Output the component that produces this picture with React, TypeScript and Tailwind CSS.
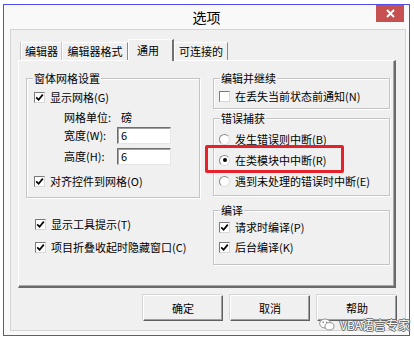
import React from 'react'

const CheckBox: React.FC<{ checked?: boolean }> = ({ checked }) => (
    <span className="w-[11px] h-[11px] shrink-0 bg-white border border-[#7a7a7a] border-b-[#d8d8d8] border-r-[#d8d8d8] flex items-center justify-center">
        {checked && (
            <svg width="9" height="9" viewBox="0 0 9 9">
                <path d="M1.2 4.3 L3.6 6.8 L7.8 1.6" stroke="#000" strokeWidth="1.7" fill="none" />
            </svg>
        )}
    </span>
)

const Radio: React.FC<{ checked?: boolean }> = ({ checked }) => (
    <span className="w-[11px] h-[11px] shrink-0 rounded-full bg-white border border-[#8a8a8a] border-b-[#dedede] border-r-[#dedede] flex items-center justify-center">
        {checked && <span className="w-[4px] h-[4px] rounded-full bg-black" />}
    </span>
)

interface RowProps {
    className?: string;
    children: React.ReactNode;
}

const Row: React.FC<RowProps> = ({ className = '', children }) => (
    <div className={'flex items-center h-[16px] gap-[5px] ' + className}>{children}</div>
)

interface GroupProps {
    title: string;
    className?: string;
    children: React.ReactNode;
}

const Group: React.FC<GroupProps> = ({ title, className = '', children }) => (
    <div className={'border border-[#c4c4c4] shadow-[1px_1px_0_#fff,inset_1px_1px_0_#fff] ' + className}>
        <div className="-mt-[8px] ml-[6px] px-[1px] w-fit h-[14px] leading-[14px] bg-[#f0f0f0]">{title}</div>
        {children}
    </div>
)

const NumberBox: React.FC<{ value: string }> = ({ value }) => (
    <div className="w-[54px] h-[17px] bg-white border border-[#6e6e6e] border-b-[#e6e6e6] border-r-[#e6e6e6] shadow-[inset_1px_1px_0_#a0a0a0] pl-[3px] leading-[15px]">
        {value}
    </div>
)

const DialogButton: React.FC<{ label: string }> = ({ label }) => (
    <div className="w-[80px] h-[26px] flex items-center justify-center bg-[#f0f0f0] border border-white border-b-[#5f5f5f] border-r-[#5f5f5f] shadow-[inset_-1px_-1px_0_#a0a0a0,-1px_-1px_0_#d6d6d6]">
        {label}
    </div>
)

const tabs = [
    { label: '编辑器', w: 'w-[41px]' },
    { label: '编辑器格式', w: 'w-[66px]' },
    { label: '通用', w: 'w-[46px]', active: true },
    { label: '可连接的', w: 'w-[54px]' },
]

export default function App() {
    return (
        <div className="w-[414px] h-[344px] bg-white relative pt-[4px] pl-[3px] text-[11px] text-black font-['Noto_Sans_CJK_SC','Liberation_Sans',sans-serif]">
            {/* window */}
            <div className="w-[407px] h-[332px] border border-[#4d4df0] bg-[#f9f9f9] flex flex-col">
                <div className="h-[24px] grid grid-cols-[1fr_auto_1fr]">
                    <div />
                    <div className="text-[14px] leading-[24px]">选项</div>
                    <div className="flex justify-end">
                        <div className="w-[28px] h-[17px] mr-[5px] bg-[#c75050] flex items-center justify-center">
                            <svg width="9" height="9" viewBox="0 0 9 9">
                                <path d="M1 1 L8 8 M8 1 L1 8" stroke="#fff" strokeWidth="1.8" />
                            </svg>
                        </div>
                    </div>
                </div>

                {/* client area */}
                <div className="ml-[6px] mr-[3px] h-[302px] border border-[#d4d4d4] bg-[#f0f0f0] pt-[9px] pl-[7px] flex flex-col">
                    <div className="h-[21px] flex items-end pl-[3px]">
                        {tabs.map((t) =>
                            t.active ? (
                                <div
                                    key={t.label}
                                    className={t.w + ' h-[22px] -mb-[1px] relative z-10 bg-[#f0f0f0] border-t border-l border-white border-r-2 border-r-[#707070] pl-[8px] pt-[3px] leading-[14px]'}
                                >
                                    {t.label}
                                </div>
                            ) : (
                                <div
                                    key={t.label}
                                    className={t.w + ' h-[18px] bg-[#f0f0f0] border-t border-l border-white border-r border-r-[#8a8a8a] shadow-[-1px_0_0_#c8c8c8] text-center leading-[17px]'}
                                >
                                    {t.label}
                                </div>
                            )
                        )}
                    </div>

                    {/* tab panel */}
                    <div className="w-[378px] h-[228px] border border-white border-r-2 border-b-2 border-r-[#6a6a6a] border-b-[#6a6a6a] shadow-[inset_-1px_-1px_0_#a8a8a8] flex pl-[7px] pt-[17px] gap-[13px]">
                        <div className="w-[174px] flex flex-col">
                            <Group title="窗体网格设置" className="h-[120px]">
                                <Row className="mt-[4px] pl-[7px]">
                                    <CheckBox checked />
                                    <span>显示网格(G)</span>
                                </Row>
                                <Row className="mt-[4px] pl-[37px] gap-0">
                                    <span className="w-[52px]">网格单位:</span>
                                    <span>磅</span>
                                </Row>
                                <div className="mt-[2px] h-[17px] flex items-center pl-[37px]">
                                    <span className="w-[53px]">宽度(W):</span>
                                    <NumberBox value="6" />
                                </div>
                                <div className="mt-[4px] h-[17px] flex items-center pl-[37px]">
                                    <span className="w-[53px]">高度(H):</span>
                                    <NumberBox value="6" />
                                </div>
                                <Row className="mt-[8px] pl-[7px]">
                                    <CheckBox checked />
                                    <span>对齐控件到网格(O)</span>
                                </Row>
                            </Group>
                            <Row className="mt-[18px] pl-[9px]">
                                <CheckBox checked />
                                <span>显示工具提示(T)</span>
                            </Row>
                            <Row className="mt-[7px] pl-[9px]">
                                <CheckBox checked />
                                <span>项目折叠收起时隐藏窗口(C)</span>
                            </Row>
                        </div>

                        <div className="w-[177px] flex flex-col">
                            <Group title="编辑并继续" className="h-[31px]">
                                <Row className="mt-[3px] pl-[5px]">
                                    <CheckBox />
                                    <span>在丢失当前状态前通知(N)</span>
                                </Row>
                            </Group>
                            <Group title="错误捕获" className="mt-[9px] h-[78px]">
                                <Row className="mt-[6px] pl-[5px]">
                                    <Radio />
                                    <span>发生错误则中断(B)</span>
                                </Row>
                                <Row className="mt-[5px] pl-[5px] relative">
                                    <Radio checked />
                                    <span>在类模块中中断(R)</span>
                                    <div className="absolute -left-[9px] -top-[7px] w-[139px] h-[28px] border-[3px] border-[#e8202a] rounded-[2px]" />
                                </Row>
                                <Row className="mt-[5px] pl-[5px]">
                                    <Radio />
                                    <span>遇到未处理的错误时中断(E)</span>
                                </Row>
                            </Group>
                            <Group title="编译" className="mt-[14px] h-[55px]">
                                <Row className="mt-[2px] pl-[5px]">
                                    <CheckBox checked />
                                    <span>请求时编译(P)</span>
                                </Row>
                                <Row className="mt-[4px] pl-[5px]">
                                    <CheckBox checked />
                                    <span>后台编译(K)</span>
                                </Row>
                            </Group>
                        </div>
                    </div>

                    <div className="mt-[7px] pr-[8px] flex justify-end gap-[7px]">
                        <DialogButton label="确定" />
                        <DialogButton label="取消" />
                        <DialogButton label="帮助" />
                    </div>
                </div>
            </div>

            {/* watermark */}
            <div className="absolute left-[319px] top-[318px] flex items-center gap-[5px] text-white text-[12px] leading-[13px] [text-shadow:1px_0_0_#666,-1px_0_0_#666,0_1px_0_#666,0_-1px_0_#666]">
                <svg width="16" height="13" viewBox="0 0 16 13">
                    <ellipse cx="6" cy="5.5" rx="5.3" ry="4.5" fill="#fff" stroke="#888" strokeWidth="0.9" />
                    <ellipse cx="10.5" cy="8.3" rx="4.5" ry="3.7" fill="#fff" stroke="#888" strokeWidth="0.9" />
                    <circle cx="4.2" cy="4.4" r="0.8" fill="#888" />
                    <circle cx="7.6" cy="4.4" r="0.8" fill="#888" />
                </svg>
                <span>VBA语言专家</span>
            </div>
        </div>
    )
}
